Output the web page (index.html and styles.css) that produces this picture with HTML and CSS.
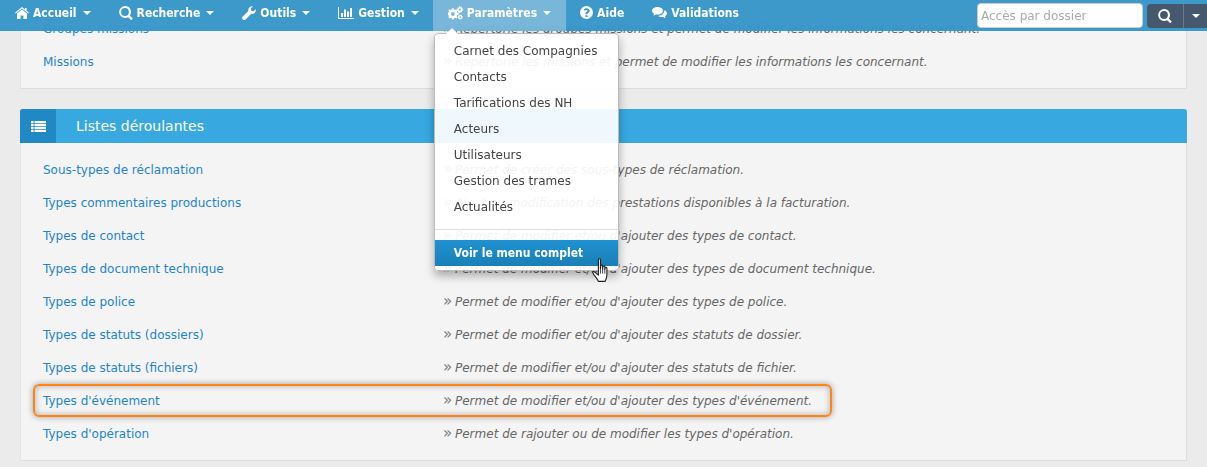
FILE: index.html
```html
<!DOCTYPE html>
<html lang="fr">
<head>
<meta charset="utf-8">
<title>Paramètres</title>
<link rel="stylesheet" href="styles.css">
</head>
<body>
<svg class="sprites" width="0" height="0">
  <symbol id="i-home" viewBox="0 0 14 12"><path d="M7 0 9.900 2.400V1H11.600V3.800L14 5.800 13.300 6.600 7 1.400.7 6.600 0 5.800Z M7 2.500 12 6.600V12H8.400V8.400H5.600V12H2V6.600Z"/></symbol>
  <symbol id="i-search" viewBox="0 0 14 14"><path fill-rule="evenodd" d="M6 0a6 6 0 0 1 4.800 9.600l3 3-1.600 1.600-3-3A6 6 0 1 1 6 0Zm0 2.100a3.900 3.900 0 1 0 0 7.800 3.900 3.900 0 0 0 0-7.800Z"/></symbol>
  <symbol id="i-wrench" viewBox="0 0 14 14"><path d="M13.800 3.200c.3 1.400-.1 2.800-1.100 3.700-1 .9-2.300 1.200-3.500.9L3.600 13.400a1.900 1.900 0 0 1-2.800 0 1.900 1.900 0 0 1 0-2.800L6.400 5C6 3.700 6.400 2.400 7.300 1.400 8.300.4 9.700 0 11 .3L8.800 2.500 9.300 4.700 11.500 5.200Z"/></symbol>
  <symbol id="i-chart" viewBox="0 0 16 12"><path d="M0 0H1V11H16V12H0Z M3 6H5V10H3Z M6 2.500H8V10H6Z M9 4.500H11V10H9Z M12 1H14V10H12Z"/></symbol>
  <symbol id="i-cogs" viewBox="0 0 15 14"><path fill-rule="evenodd" d="M4 2.500 5.600 2.200 6 3.500 7.300 4.100 8.400 3.300 9.500 4.400 8.800 5.500 9.300 6.800 10.700 7V8.700L9.300 9 8.800 10.200 9.500 11.300 8.400 12.400 7.300 11.700 6 12.200 5.600 13.500H4.100L3.800 12.200 2.500 11.700 1.400 12.400.3 11.300 1 10.200.5 9 0 8.700V7L.5 6.800 1 5.500.3 4.400 1.400 3.300 2.500 4.100 3.800 3.500ZM4.900 6.100a1.900 1.900 0 1 0 0 3.800 1.900 1.900 0 0 0 0-3.800Z"/><path fill-rule="evenodd" d="M11.800 0 12.500.9 13.700.8 14.100 1.900 15 2.600 14.500 3.600 15 4.700 14.100 5.300 13.700 6.400 12.500 6.300 11.800 7.200 10.800 6.400 9.700 6.200 9.600 5 8.800 4.100 9.500 3.100 9.500 2 10.500 1.500 10.900.5ZM11.900 2.500a1.100 1.100 0 1 0 0 2.200 1.100 1.100 0 0 0 0-2.200Z"/><path fill-rule="evenodd" d="M12 8.500 12.800 8.900 13.800 8.900 14 9.900 14.800 10.600 14.300 11.500 14.300 12.500 13.300 12.800 12.600 13.600 11.700 13.200 10.700 13.100 10.500 12.200 9.700 11.500 10.200 10.600 10.200 9.600 11.200 9.300ZM12.200 10.200a.9.900 0 1 0 0 1.800.9.900 0 0 0 0-1.800Z"/></symbol>
  <symbol id="i-help" viewBox="0 0 13 13"><path fill-rule="evenodd" d="M6.500 0a6.500 6.500 0 1 1 0 13 6.500 6.500 0 0 1 0-13ZM5.400 9.300V11H7.500V9.300ZM6.600 2.200C5.300 2.200 4.400 2.800 3.700 3.700L5 4.700C5.400 4.200 5.800 3.900 6.400 3.900 7 3.900 7.500 4.200 7.500 4.700 7.500 5.200 7.100 5.400 6.500 5.700 5.800 6.100 5.400 6.600 5.400 7.400V8.300H7.500V7.700C7.500 7.300 7.800 7.100 8.300 6.800 9 6.400 9.700 5.800 9.700 4.700 9.700 3.100 8.200 2.200 6.600 2.200Z"/></symbol>
  <symbol id="i-comments" viewBox="0 0 15 12"><path d="M5.500 0C8.500 0 11 1.700 11 3.800S8.500 7.600 5.500 7.600C5 7.600 4.400 7.500 3.900 7.400 3.100 8 2.200 8.400 1.200 8.600 1.600 8 1.900 7.400 2 6.700.8 6 0 5 0 3.800 0 1.700 2.500 0 5.500 0Z"/><path d="M12.200 3.200C13.900 3.800 15 5 15 6.300 15 7.500 14.200 8.500 13 9.200 13.100 9.900 13.400 10.500 13.800 11.100 12.800 10.900 11.900 10.500 11.100 9.900 10.600 10 10 10.100 9.500 10.100 8 10.100 6.700 9.600 5.800 8.800 9.200 8.800 12.300 6.800 12.200 3.200Z"/></symbol>
  <symbol id="i-list" viewBox="0 0 15 11"><path d="M0 0H2.600V2.200H0ZM3.500 0H15V2.200H3.500ZM0 2.900H2.600V5.100H0ZM3.500 2.900H15V5.100H3.500ZM0 5.800H2.600V8H0ZM3.500 5.800H15V8H3.500ZM0 8.700H2.600V10.900H0ZM3.500 8.700H15V10.900H3.500Z"/></symbol>
</svg>

<header class="navbar">
  <nav class="nav-items">
    <a class="nav-item"><svg class="ico ico-home"><use href="#i-home"/></svg>Accueil<span class="caret"></span></a>
    <a class="nav-item"><svg class="ico ico-search"><use href="#i-search"/></svg>Recherche<span class="caret"></span></a>
    <a class="nav-item"><svg class="ico ico-search"><use href="#i-wrench"/></svg>Outils<span class="caret"></span></a>
    <a class="nav-item"><svg class="ico ico-chart"><use href="#i-chart"/></svg>Gestion<span class="caret"></span></a>
    <div class="nav-open">
      <a class="nav-item is-active"><svg class="ico ico-cogs"><use href="#i-cogs"/></svg>Paramètres<span class="caret"></span></a>
      <div class="dropdown">
        <span class="dropdown-arrow"></span>
        <a class="dd-item">Carnet des Compagnies</a>
        <a class="dd-item">Contacts</a>
        <a class="dd-item">Tarifications des NH</a>
        <a class="dd-item">Acteurs</a>
        <a class="dd-item">Utilisateurs</a>
        <a class="dd-item">Gestion des trames</a>
        <a class="dd-item">Actualités</a>
        <div class="dd-divider"></div>
        <a class="dd-item dd-full">Voir le menu complet</a>
        <svg class="cursor" viewBox="0 0 18 24"><path d="M6 1.500C6 .6 8 .6 8 1.500V10L8.300 7.500C8.400 6.700 10 6.700 10.100 7.500V10.500L10.400 8.300C10.500 7.500 12.100 7.500 12.200 8.300V11L12.500 9.500C12.700 8.700 14.200 8.900 14.200 9.700V16C14.200 19 13 20.500 12.500 22.500H6C5.500 20.500 4 19 2 16.500L.8 14.500C.3 13.500 1.500 12.500 2.500 13.500L6 16.500Z" fill="#fff" stroke="#222" stroke-width="1.100" stroke-linejoin="round"/><path d="M8 10V15M10.100 10.500V15M12.200 11V15" stroke="#222" stroke-width=".8"/></svg>
      </div>
    </div>
    <a class="nav-item"><svg class="ico ico-help"><use href="#i-help"/></svg>Aide</a>
    <a class="nav-item"><svg class="ico ico-comments"><use href="#i-comments"/></svg>Validations</a>
  </nav>
  <form class="nav-search">
    <input class="nav-input" type="text" placeholder="Accès par dossier">
    <div class="btn-group">
      <button class="btn-search" type="button"><svg class="ico-btn"><use href="#i-search"/></svg></button>
      <button class="btn-more" type="button"><span class="caret"></span></button>
    </div>
  </form>
</header>

<main class="page">
  <section class="card card-first">
    <div class="card-body card-body-top">
      <div class="row"><a class="row-link">Groupes missions</a><p class="row-desc"><span class="quote">»</span>Répertorie les groupes missions et permet de modifier les informations les concernant.</p></div>
      <div class="row"><a class="row-link">Missions</a><p class="row-desc"><span class="quote">»</span>Répertorie les missions et permet de modifier les informations les concernant.</p></div>
    </div>
  </section>

  <section class="card">
    <h2 class="card-head"><span class="head-icon"><svg class="ico-list"><use href="#i-list"/></svg></span><span class="head-title">Listes déroulantes</span></h2>
    <div class="card-body">
      <div class="row"><a class="row-link">Sous-types de réclamation</a><p class="row-desc"><span class="quote">»</span>Permet de créer des sous-types de réclamation.</p></div>
      <div class="row"><a class="row-link">Types commentaires productions</a><p class="row-desc"><span class="quote">»</span>Ajout ou modification des prestations disponibles à la facturation.</p></div>
      <div class="row"><a class="row-link">Types de contact</a><p class="row-desc"><span class="quote">»</span>Permet de modifier et/ou d'ajouter des types de contact.</p></div>
      <div class="row"><a class="row-link">Types de document technique</a><p class="row-desc"><span class="quote">»</span>Permet de modifier et/ou d'ajouter des types de document technique.</p></div>
      <div class="row"><a class="row-link">Types de police</a><p class="row-desc"><span class="quote">»</span>Permet de modifier et/ou d'ajouter des types de police.</p></div>
      <div class="row"><a class="row-link">Types de statuts (dossiers)</a><p class="row-desc"><span class="quote">»</span>Permet de modifier et/ou d'ajouter des statuts de dossier.</p></div>
      <div class="row"><a class="row-link">Types de statuts (fichiers)</a><p class="row-desc"><span class="quote">»</span>Permet de modifier et/ou d'ajouter des statuts de fichier.</p></div>
      <div class="row row-marked"><span class="marker"></span><a class="row-link">Types d'événement</a><p class="row-desc"><span class="quote">»</span>Permet de modifier et/ou d'ajouter des types d'événement.</p></div>
      <div class="row"><a class="row-link">Types d'opération</a><p class="row-desc"><span class="quote">»</span>Permet de rajouter ou de modifier les types d'opération.</p></div>
    </div>
  </section>
</main>
</body>
</html>
```

FILE: styles.css
```css
* { box-sizing: border-box; }
html, body { margin: 0; height: 100%; overflow: hidden; }
body {
  background: #ebebeb;
  color: #555;
  font-family: "DejaVu Sans", Verdana, sans-serif;
  font-size: 12px;
}
.sprites { position: absolute; }

.navbar {
  position: fixed;
  top: 0; left: 0; right: 0;
  height: 31px;
  z-index: 10;
  display: flex;
  justify-content: space-between;
  background: rgba(54, 149, 201, .96);
}
.nav-items { display: flex; padding-left: 1px; }
.nav-item {
  display: flex;
  align-items: center;
  gap: 4px;
  height: 31px;
  padding: 0 14px 6px;
  color: #fff;
  font-size: 12px;
  font-weight: 700;
  font-stretch: condensed;
  white-space: nowrap;
}
.is-active { background: rgba(255, 255, 255, .3); padding: 0 15px 6px; }
.nav-open { position: relative; }
.ico { fill: #fff; flex: none; }
.ico-home { width: 14px; height: 12px; }
.ico-search { width: 14px; height: 14px; }
.ico-chart { width: 16px; height: 12px; }
.ico-cogs { width: 15px; height: 14px; }
.ico-help { width: 13px; height: 13px; }
.ico-comments { width: 15px; height: 12px; }
.caret {
  width: 0; height: 0;
  margin-left: 2px;
  border: 4px solid transparent;
  border-top-color: #fff;
  border-bottom: 0;
}

.nav-search { display: flex; gap: 4px; padding: 3px 0 0; height: 31px; }
.nav-input {
  width: 166px; height: 25px;
  padding: 0 3px;
  border: 1px solid #ccc;
  border-radius: 4px;
  background: #fff;
  font: 12px "DejaVu Sans", Verdana, sans-serif;
  color: #555;
}
.nav-input::placeholder { color: #aaa; opacity: 1; }
.btn-group { display: flex; height: 24px; margin-top: 1px; }
.btn-search, .btn-more {
  display: flex; align-items: center; justify-content: center;
  padding: 0; border: 0;
  background: #46586e;
}
.btn-search { width: 36px; border-radius: 4px 0 0 4px; }
.btn-more { width: 24px; border-left: 1px solid #6a7a8c; }
.btn-more .caret { margin: 0; }
.ico-btn { width: 14px; height: 14px; fill: #fff; }

.dropdown {
  position: absolute;
  top: 33px; left: 1px;
  width: 185px; height: 238px;
  padding: 4px 0;
  background: rgba(255, 255, 255, .92);
  border: 1px solid #bbb;
  border-radius: 4px;
  box-shadow: 0 5px 10px rgba(0, 0, 0, .3);
}
.dropdown-arrow {
  position: absolute;
  top: -6px; left: 11px;
  border: 6px solid transparent;
  border-top: 0;
  border-bottom-color: #fff;
}
.dd-item {
  display: block;
  height: 26px;
  padding: 0 19px;
  line-height: 26px;
  color: #444;
  font-size: 12px;
  white-space: nowrap;
}
.dd-divider { height: 1px; margin: 9px 0 10px; background: #ddd; }
.dd-full {
  color: #fff;
  font-weight: 700;
  font-stretch: condensed;
  background: linear-gradient(#1f91d1, #1a7fb6);
}
.cursor {
  position: absolute;
  top: 224px; left: 157px;
  width: 19px; height: 25px;
}

.page { margin-top: -8px; padding: 0 20px; }
.card { margin-bottom: 21px; }
.card-first { margin-bottom: 20px; }
.card-head {
  display: flex;
  align-items: center;
  height: 34px;
  margin: 0;
  background: #37a8e0;
  border-radius: 3px 3px 0 0;
  color: #fff;
  font-size: 14px;
  font-weight: 400;
}
.head-icon {
  display: flex; align-items: center; justify-content: center;
  width: 36px; height: 34px;
  background: #2089c5;
  border-radius: 3px 0 0 0;
}
.ico-list { width: 15px; height: 11px; fill: #fff; }
.head-title { margin-left: 20px; }
.card-body {
  padding: 10px 22px 10px;
  background: #f4f4f4;
  border: 1px solid #ddd;
  border-top: 0;
  border-left-color: #e4e4e4;
}
.card-body-top { padding-top: 20px; padding-bottom: 10px; }
.row {
  position: relative;
  display: grid;
  grid-template-columns: 400px 1fr;
  align-items: center;
  height: 33px;
  white-space: nowrap;
}
.row-link { color: #1f85c9; }
.row-desc { margin: 0; color: #666; font-style: italic; }
.quote {
  display: inline-block;
  width: 12px;
  font-size: 15px;
  line-height: 12px;
  font-style: normal;
  color: #777;
}
.marker {
  position: absolute;
  top: 0; left: -10px;
  width: 799px; height: 33px;
  border: 2px solid #ff8413;
  border-radius: 6px;
  box-shadow: 0 0 6px rgba(0, 0, 0, .35), inset 0 0 6px rgba(0, 0, 0, .3);
}
```
